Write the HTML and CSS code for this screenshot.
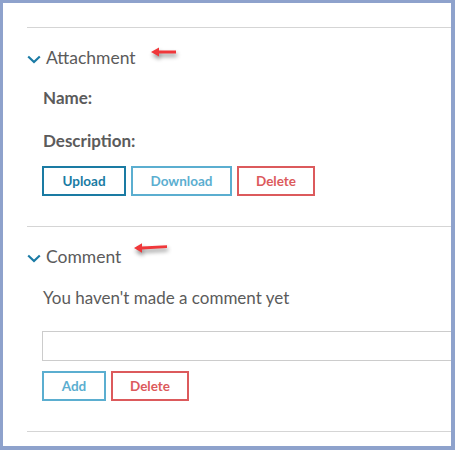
FILE: index.html
```
<!DOCTYPE html>
<html>
<head>
<meta charset="utf-8">
<link rel="stylesheet" href="styles.css">
</head>
<body>
<div class="frame">
  <div class="content">
    <section class="section">
      <div class="section-head">
        <svg class="chevron" width="14" height="9" viewBox="0 0 14 9"><path d="M1.2 1.5 L7 7 L12.8 1.5" fill="none" stroke="#1b7ba5" stroke-width="2.2"/></svg>
        <span class="title">Attachment</span>
        <svg class="arrow arrow-a" width="28" height="14" viewBox="0 0 28 14"><path d="M0 5 L8 0.5 L8 3.6 L25 3.6 L25 6.4 L8 6.4 L8 9.5 Z" fill="#f0373a"/></svg>
      </div>
      <div class="body">
        <div class="label">Name:</div>
        <div class="label label-gap">Description:</div>
        <div class="buttons buttons-a">
          <button class="btn btn-primary">Upload</button>
          <button class="btn btn-info">Download</button>
          <button class="btn btn-danger">Delete</button>
        </div>
      </div>
    </section>
    <section class="section">
      <div class="section-head">
        <svg class="chevron" width="14" height="9" viewBox="0 0 14 9"><path d="M1.2 1.5 L7 7 L12.8 1.5" fill="none" stroke="#1b7ba5" stroke-width="2.2"/></svg>
        <span class="title">Comment</span>
        <svg class="arrow arrow-b" width="36" height="14" viewBox="0 0 36 14"><path d="M0 6 L8 1.2 L8 4.4 L33 3.2 L33 6 L8 7.6 L8 10.8 Z" fill="#f0373a"/></svg>
      </div>
      <div class="body">
        <div class="text">You haven't made a comment yet</div>
        <div class="input"></div>
        <div class="buttons buttons-b">
          <button class="btn btn-info btn-add">Add</button>
          <button class="btn btn-danger">Delete</button>
        </div>
      </div>
    </section>
    <section class="section end"></section>
  </div>
</div>
</body>
</html>
```
FILE: styles.css
```
html, body {
  margin: 0;
  padding: 0;
  background: #ffffff;
}
.frame {
  box-sizing: border-box;
  width: 455px;
  height: 450px;
  border: 3px solid #8ea2cc;
  border-right-width: 4px;
  border-bottom-width: 4px;
  background: #ffffff;
  overflow: hidden;
  font-family: Lato, "Liberation Sans", sans-serif;
  color: #5b5b5b;
}
.content {
  margin-left: 24px;
  padding-top: 24px;
}
.section {
  border-top: 1px solid #d5d5d5;
  padding-bottom: 30px;
}
.section.end {
  padding: 0;
}
.section-head {
  display: flex;
  align-items: center;
  height: 24px;
  margin-top: 17px;
}
.chevron {
  margin-left: 0;
  margin-top: 5px;
}
.title {
  margin-left: 5px;
  font-size: 17.5px;
}
.arrow {
  filter: drop-shadow(1px 3px 2px rgba(0, 0, 0, 0.45));
}
.arrow-a {
  margin-left: 15px;
  margin-bottom: 6px;
}
.arrow-b {
  margin-left: 13px;
  margin-bottom: 14px;
}
.body {
  padding-left: 15px;
}
.label {
  font-weight: bold;
  font-size: 17px;
  line-height: 20px;
  margin-top: 19px;
  padding-left: 1px;
}
.label-gap {
  margin-top: 23px;
}
.buttons {
  display: flex;
  gap: 5px;
}
.buttons-a {
  margin-top: 15px;
}
.buttons-b {
  margin-top: 10px;
}
.btn {
  box-sizing: border-box;
  height: 30px;
  background: #ffffff;
  border: 2px solid;
  border-radius: 0;
  font-family: Lato, "Liberation Sans", sans-serif;
  font-weight: bold;
  font-size: 13.5px;
  padding: 0;
  width: 84px;
}
.btn-primary {
  border-color: #1a7ba3;
  color: #1a7ba3;
}
.btn-info {
  border-color: #5baed0;
  color: #5baed0;
  width: 101px;
}
.btn-danger {
  border-color: #dc5a5c;
  color: #dc5a5c;
  width: 78px;
}
.btn-add {
  width: 64px;
}
.text {
  font-size: 17px;
  line-height: 20px;
  margin-top: 20px;
  padding-left: 1px;
}
.input {
  box-sizing: border-box;
  height: 30px;
  margin-top: 23px;
  margin-right: -20px;
  border: 1px solid #cccccc;
  border-right: none;
}
```
